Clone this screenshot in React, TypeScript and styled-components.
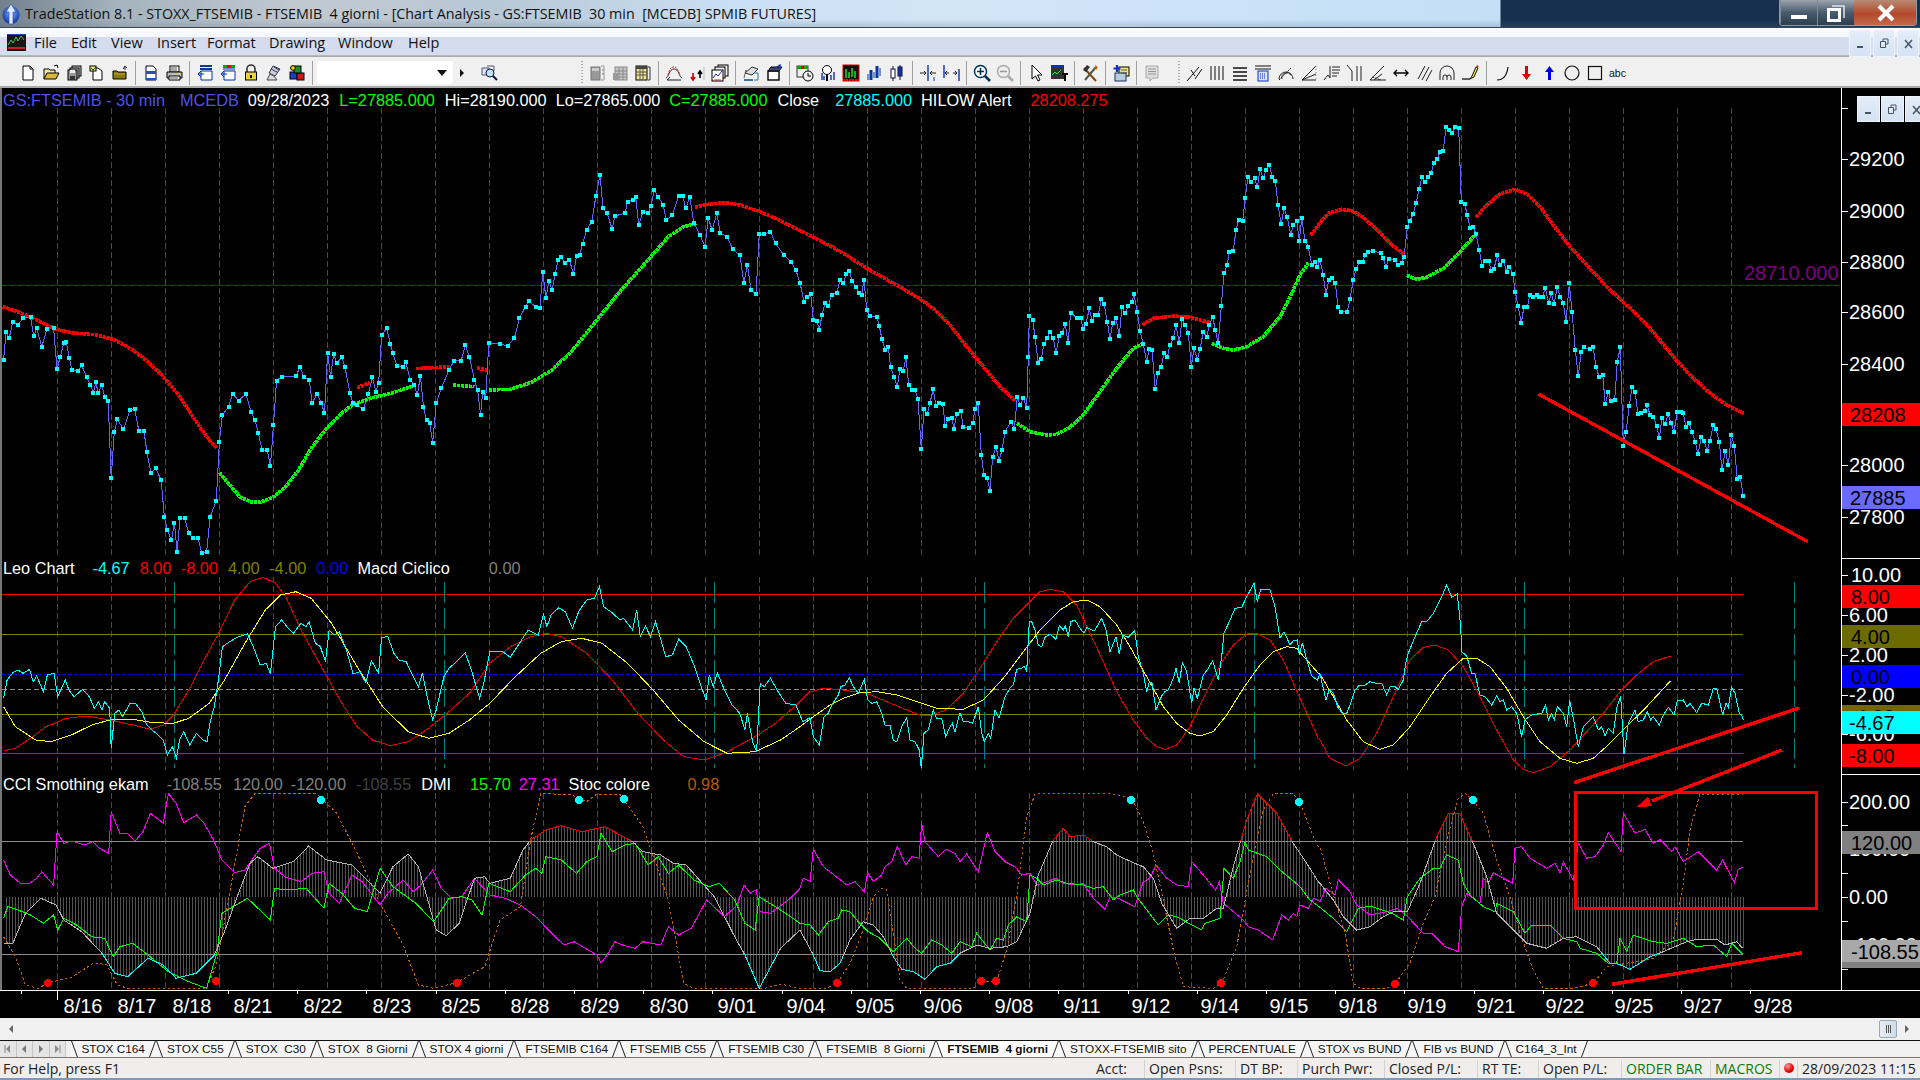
import React from "react";
import styled, { createGlobalStyle } from "styled-components";

const GlobalStyle = createGlobalStyle`
  html, body { margin: 0; padding: 0; background: #000; }
  * { box-sizing: border-box; }
`;

/* ---------- chart data, read off the screen in crop coordinates ---------- */
type Pt = [number, number];

const reader = (ox: number, sx: number, oy: number) => (s: string): Pt[] =>
  s.trim().split(/\s+/).map((p) => {
    const [x, y] = p.split(",").map(Number);
    return [ox + x / sx, oy + y / 3] as Pt;
  });

const topL = reader(0, 1.96, 90);
const topM = reader(800, 3, 90);
const topR = reader(1320, 3, 90);
const lowL = reader(0, 1.96, 540);
const lowM = reader(800, 3, 550);
const lowR = reader(1320, 3, 550);

const price: Pt[] = [
  ...topL("7,810 12,725 18,745 25,695 35,705 45,685 60,682 66,738 72,715 82,770 92,718 105,715 112,838 118,800 125,760 130,757 136,805 141,840 153,843 160,826 170,860 177,885 183,908 188,875 192,908 200,885 205,920 212,932 218,1165 224,1025 230,988 242,1018 255,960 264,957 272,1022 282,1022 288,1085 296,1150 305,1135 316,1170 322,1280 328,1320 336,1350 342,1298 347,1385 353,1285 362,1285 370,1330 378,1345 388,1345 396,1390 405,1385 412,1280 424,1232 430,1055 436,975 448,950 456,912 468,932 482,912 492,965 500,990 506,1028 514,1080 524,1080 530,1128 536,1005 542,872 552,860 580,858 588,832 596,862 606,870 612,938 622,912 630,940 636,970 642,788 648,860 654,793 660,820 670,802 676,830 686,910 692,940 700,945 712,958 722,912 730,862 737,905 742,880 748,735 758,715 765,762 770,790 778,828 790,830 795,815 804,870 812,885 818,915 824,858 830,952 836,990 842,998 848,1058 855,940 865,895 880,840 890,812 904,812 912,765 920,800 930,870 936,900 942,975 946,905 952,925 958,760 980,762 995,768 1008,745 1018,685 1030,650 1036,634 1050,650 1058,655 1064,545 1070,625 1076,572 1082,600 1088,552 1094,510 1100,502 1108,520 1116,510 1124,552 1130,498 1136,495 1142,462 1150,420 1160,395 1168,318 1176,255 1182,355 1190,370 1200,418 1205,378 1225,370 1230,335 1240,330 1246,320 1252,405 1260,365 1270,370 1276,348 1282,300 1290,320 1300,345 1306,390 1318,375 1330,318 1338,318 1344,355 1352,322 1360,400 1372,435 1382,470 1388,385 1396,420 1405,370 1412,430 1425,440 1436,478 1450,495 1458,578 1465,525 1472,600 1482,612 1488,432 1498,432 1510,425 1520,460 1536,495 1550,515 1560,540"),
  ...topM("0,578 12,635 22,620 32,612 40,690 50,692 58,720 66,675 75,640 85,648 95,615 110,608 120,570 130,580 138,553 148,542 156,572 168,590 176,608 185,615 192,570 200,660 210,678 230,680 238,708 246,748 256,780 265,772 272,832 282,862 292,890 300,836 310,842 318,802 326,885 335,900 345,900 354,928 364,1077 372,958 382,972 390,938 400,898 408,948 418,938 428,942 436,1008 445,988 455,985 462,1017 470,972 482,964 490,1010 508,1014 518,998 525,958 535,940 544,1095 552,1155 562,1165 570,1203 578,1100 588,1070 597,1112 606,1080 615,1025 633,995 643,1018 652,920 660,945 670,925 680,955 685,800 688,678 698,690 705,740 715,818 724,806 732,762 742,745 750,725 760,745 768,790 778,738 786,730 796,703 804,760 812,668 830,683 842,685 850,718 858,703 868,655 876,692 885,675 895,675 904,628 912,642 922,695 930,748 938,698 948,684 958,738 966,650 976,670 985,648 995,636 1002,613 1012,665 1020,722 1030,762 1040,816 1048,776 1056,780 1066,898 1074,848 1084,830 1092,790 1102,800 1110,765 1120,745 1128,706 1138,760 1146,688 1156,705 1165,730 1174,830 1182,775 1192,810 1200,778 1210,725 1220,742 1228,706 1238,680 1246,720 1255,760 1264,648 1272,550 1282,525 1288,485 1300,482 1308,420 1316,390 1328,392 1336,324 1344,260 1354,275 1364,265 1372,292 1380,238 1390,265 1398,240 1408,225 1416,260 1426,272 1434,345 1444,402 1452,355 1462,382 1472,435 1480,405 1490,392 1498,452 1505,385 1515,452 1525,470 1535,525 1544,515 1552,530"),
  ...topR("0,510 10,556 18,615 26,570 36,565 46,578 54,652 64,665 82,665 90,628 100,570 108,538 118,515 128,515 136,495 145,485 160,482 182,490 190,505 198,530 206,508 225,510 235,525 245,518 252,502 262,412 270,392 280,372 288,340 298,296 306,260 316,276 324,260 334,248 342,218 352,208 360,185 370,182 378,112 388,120 396,128 406,112 416,115 424,335 434,342 442,375 450,415 460,412 468,432 478,480 486,527 494,512 506,512 514,543 522,536 532,496 540,526 550,512 560,545 568,530 578,552 586,605 594,648 604,698 612,650 622,650 630,615 640,622 650,615 658,622 668,620 676,595 686,638 694,610 702,642 712,592 720,620 730,638 738,696 748,580 756,665 766,780 775,858 784,785 792,772 810,778 820,772 828,832 838,862 848,854 856,942 865,905 872,932 884,930 892,815 901,772 910,1068 918,1025 928,948 936,890 945,905 954,972 964,968 974,962 982,946 990,975 1000,980 1010,1008 1018,1043 1026,985 1036,1002 1044,972 1054,1000 1062,1025 1072,965 1082,965 1090,970 1098,1010 1108,1000 1116,1025 1126,1056 1134,1092 1144,1042 1152,1052 1162,1082 1170,1052 1180,1006 1188,1016 1198,1056 1206,1140 1216,1082 1225,1125 1234,1036 1243,1068 1252,1166 1261,1162 1270,1217"),
];

const hilowRed: Pt[][] = [
  topL("5,650 40,668 80,695 110,718 140,728 190,735 225,750 260,780 290,815 320,860 350,915 380,985 405,1040 425,1075"),
  topL("700,893 725,878"),
  topL("815,836 880,830"),
  topL("935,834 955,840"),
  [...topL("1362,352 1390,342 1420,338 1450,345 1490,365 1530,392"), ...topM("0,422 60,452 130,490 200,535 280,580 350,620 400,655 450,705 500,770 550,830 600,890 645,932")],
  topM("1028,705 1060,685 1120,678 1170,682 1230,698"),
  [...topM("1532,435 1552,410"), ...topR("0,398 25,370 65,358 95,362 130,382 180,428 220,468 252,493")],
  topR("468,382 495,350 540,312 585,298 620,312 660,350 700,405 750,470 800,525 860,590 930,655 990,715 1060,800 1110,855 1170,910 1220,945 1272,970"),
];

const hilowGreen: Pt[][] = [
  topL("430,1148 445,1175 470,1220 490,1235 510,1237 535,1222 560,1190 585,1140 610,1075 640,1015 670,970 690,945 730,923 770,908 810,888"),
  topL("888,885 930,890"),
  topL("958,900 1000,898 1040,878 1080,842 1120,785 1170,690 1215,605 1270,510 1310,440 1340,410 1365,400"),
  topM("650,1000 690,1025 740,1035 770,1033 810,1012 850,975 900,905 950,835 1000,775 1030,760"),
  topM("1235,760 1270,775 1300,780 1340,770 1390,740 1440,680 1480,600 1500,555 1525,518"),
  topR("260,556 290,568 320,562 370,535 420,485 468,432"),
];

const macd: Pt[] = [
  ...lowL("7,475 14,420 25,398 35,390 45,400 58,388 65,425 72,408 85,455 93,405 106,400 113,470 128,420 135,450 145,470 162,448 175,470 185,505 193,485 200,510 205,485 215,505 218,625 225,520 233,510 240,530 255,490 265,490 278,515 288,555 298,570 310,585 320,600 328,645 338,620 346,655 352,600 360,575 372,615 385,580 398,600 406,605 412,545 420,500 428,420 436,320 450,305 465,292 485,282 495,315 510,375 522,370 530,402 540,260 552,240 565,265 575,280 590,250 600,260 606,245 618,310 628,320 638,365 645,270 655,285 665,275 680,335 692,402 705,395 717,428 728,362 742,400 748,292 760,290 772,340 782,360 796,365 810,410 820,440 828,400 840,490 848,540 855,510 870,410 880,385 895,365 912,338 925,395 940,475 948,430 960,335 985,335 1000,352 1018,310 1035,270 1055,285 1065,222 1072,260 1080,225 1095,203 1108,215 1122,265 1135,212 1150,180 1165,175 1175,140 1183,200 1200,218 1215,240 1222,235 1240,270 1248,210 1255,290 1265,258 1275,290 1285,245 1305,350 1318,345 1330,298 1345,320 1360,375 1372,430 1384,480 1390,405 1398,440 1406,398 1420,450 1435,495 1450,520 1460,570 1465,520 1475,605 1483,635 1490,430 1498,440 1510,415 1525,455 1540,490 1560,495"),
  ...lowM("0,495 8,515 30,503 40,560 58,585 72,500 85,490 95,465 115,435 122,410 135,405 148,383 160,410 175,430 193,388 203,450 215,460 230,455 245,490 255,525 270,525 280,570 290,575 305,530 320,503 330,570 345,575 358,600 364,655 372,550 385,540 400,480 410,505 425,505 437,560 450,530 457,520 465,545 480,488 490,515 505,515 518,520 535,470 545,550 553,575 565,550 572,565 585,480 597,505 615,440 630,415 640,405 650,358 665,355 672,348 680,365 688,215 695,215 705,240 715,285 725,290 735,262 750,252 768,268 778,228 790,240 796,228 805,260 812,215 825,210 840,235 852,250 860,232 875,240 885,240 905,205 918,240 930,305 948,260 958,312 968,255 985,262 1004,242 1015,320 1030,370 1040,425 1048,395 1056,400 1068,480 1084,440 1094,425 1105,420 1120,385 1128,355 1138,400 1147,338 1160,365 1175,460 1182,415 1192,445 1210,375 1225,355 1238,332 1255,390 1265,320 1272,250 1290,210 1305,175 1325,172 1340,140 1362,100 1372,155 1382,118 1410,120 1425,170 1440,265 1452,245 1470,285 1480,272 1492,270 1498,315 1507,278 1520,330 1535,378 1552,390"),
  ...lowR("0,372 18,450 28,418 40,430 55,475 68,490 80,490 92,460 105,420 118,406 135,405 150,395 170,400 185,400 200,435 210,410 225,410 235,418 250,390 258,335 265,310 285,260 305,215 320,215 340,190 365,140 380,105 395,142 412,132 422,230 425,305 440,318 455,370 465,372 480,435 495,440 515,465 530,437 540,455 550,450 560,480 575,470 590,490 605,560 615,510 635,495 665,490 677,465 685,510 695,490 703,510 712,470 730,490 740,530 749,450 760,505 775,590 790,530 820,500 835,540 845,530 855,558 865,535 880,550 890,475 902,438 912,612 925,520 945,480 955,515 970,510 982,485 992,510 1000,500 1018,525 1030,495 1045,472 1062,495 1072,452 1090,450 1100,470 1110,460 1130,488 1145,460 1165,465 1180,415 1190,415 1208,495 1218,460 1225,472 1235,412 1245,430 1258,490 1265,495 1270,510"),
];

const macdRed: Pt[] = [
  ...lowL("7,632 30,625 60,595 90,560 130,535 170,528 215,540 260,555 295,568 320,555 340,525 370,450 400,360 430,275 460,180 490,125 515,112 540,130 560,170 590,270 630,380 670,490 700,560 730,600 765,617 800,605 840,565 880,515 920,460 960,370 1000,320 1040,290 1070,280 1100,290 1150,340 1200,420 1250,520 1300,600 1340,650 1380,660 1420,640 1480,590 1520,550"),
  ...lowM("0,455 30,425 70,415 130,420 200,430 260,455 320,480 360,495 400,495 440,478 490,430 550,340 600,260 640,205 690,155 720,125 750,118 790,125 830,165 870,250 910,335 950,425 1000,510 1040,565 1070,590 1095,598 1130,585 1170,530 1210,445 1260,345 1300,285 1340,252 1370,250 1410,270 1450,330 1500,445 1555,565"),
  ...lowR("0,570 30,625 78,648 120,625 170,550 220,440 270,330 310,292 345,285 385,300 430,350 480,440 530,540 580,630 610,658 640,668 690,650 750,600 800,545 850,490 900,425 950,375 1000,335 1052,318"),
];

const macdYellow: Pt[] = [
  ...lowL("7,500 30,560 70,600 100,605 140,585 180,555 215,540 260,538 300,548 340,550 370,535 410,490 440,420 480,310 520,210 550,165 580,155 610,175 650,250 700,380 750,500 800,575 840,595 880,580 920,540 960,490 1010,410 1060,340 1100,305 1140,295 1180,310 1230,370 1280,450 1330,540 1380,605 1425,640 1480,635 1530,600"),
  ...lowM("0,530 40,500 90,465 130,445 180,428 230,425 290,435 350,455 410,475 490,478 550,450 610,385 670,305 720,240 780,180 820,155 860,150 900,170 950,225 990,290 1040,380 1090,470 1130,520 1170,550 1200,558 1240,545 1280,495 1330,415 1380,345 1420,305 1460,290 1490,295 1520,330 1555,370"),
  ...lowR("0,372 40,440 80,510 130,575 180,598 220,585 270,530 330,440 380,370 430,325 470,325 510,350 560,415 610,500 660,575 720,625 770,640 820,625 870,580 930,520 980,470 1052,392"),
];

const magenta: Pt[] = [
  ...lowL("7,960 20,1005 40,1030 58,1030 72,1015 82,995 105,1035 112,875 125,910 140,903 165,915 182,905 195,925 213,940 218,815 235,880 250,880 265,903 280,875 295,820 320,850 330,760 345,790 360,848 385,825 400,850 420,905 435,960 460,998 480,990 510,925 528,910 538,985 560,1012 590,1025 612,1000 635,995 645,1060 665,1090 690,1005 710,1025 745,1095 760,1060 790,1020 810,1055 825,1035 848,990 865,1045 885,1075 905,1070 930,1015 960,1065 990,1075 1020,1095 1050,1130 1075,1170 1105,1215 1125,1205 1170,1245 1178,1270 1190,1245 1205,1205 1220,1215 1245,1225 1260,1205 1295,1215 1310,1160 1330,1185 1355,1165 1385,1080 1420,1130 1445,1095 1458,1035 1470,1060 1482,1050 1490,1115 1510,1120 1545,1080"),
  ...lowM("0,1015 10,985 30,995 40,898 70,950 115,985 140,1005 165,995 193,1025 203,968 220,995 245,975 255,950 275,935 292,890 318,945 335,920 357,925 365,820 375,875 415,920 437,898 465,910 480,935 500,912 535,965 562,848 585,905 615,935 645,950 665,975 690,970 710,1005 770,985 790,1000 830,1005 850,1000 880,1045 915,1078 930,1040 955,1045 1004,1070 1030,995 1050,985 1068,945 1100,985 1130,1005 1165,1010 1175,935 1210,975 1247,1020 1258,995 1270,1060 1330,1110 1345,1130 1375,1140 1418,1170 1445,1095 1465,1110 1480,1090 1490,1100 1500,1065 1525,1075 1540,1045"),
  ...lowR("0,1055 18,1015 45,1035 55,990 90,1025 110,1065 150,1095 200,1085 230,1075 258,1095 310,1150 335,1150 375,1190 415,1205 425,1070 440,1030 480,1060 490,985 505,1000 520,968 550,985 578,1000 585,895 605,890 630,925 680,955 705,940 720,970 730,935 760,990 775,880 800,925 825,920 850,885 865,848 903,905 910,790 945,850 975,838 1000,880 1020,868 1055,905 1065,890 1090,935 1135,905 1190,960 1208,930 1243,998 1255,958 1268,952"),
];

const dmiGreen: Pt[] = [
  ...lowL("7,1135 15,1100 35,1110 60,1125 85,1150 105,1125 113,1170 125,1135 150,1155 180,1190 205,1195 222,1250 235,1220 260,1210 290,1245 330,1295 370,1325 405,1345 425,1240 435,1120 485,1075 530,1140 538,1045 560,1050 600,1045 635,1105 645,1030 670,1060 695,1105 720,1115 745,985 770,1040 815,1090 850,1145 880,1075 905,1070 925,1080 945,1125 958,1030 1000,1055 1030,1005 1050,985 1062,1000 1070,950 1100,960 1130,1000 1150,965 1170,950 1178,880 1200,935 1225,915 1245,910 1270,975 1290,950 1310,1000 1330,975 1360,1020 1390,1040 1410,1030 1440,1080 1460,1150 1480,1170 1488,1070 1530,1110"),
  ...lowM("0,1120 30,1125 55,1155 85,1115 115,1105 125,1080 150,1085 175,1115 205,1145 240,1165 280,1205 320,1165 345,1195 365,1210 395,1170 425,1185 455,1210 480,1175 515,1190 530,1150 570,1200 590,1165 610,1170 625,1125 650,1100 680,1115 690,975 710,985 730,1005 770,990 800,1000 850,1005 880,1015 910,1010 940,1050 960,1035 1000,1020 1010,1040 1075,1125 1105,1095 1130,1100 1175,1125 1205,1140 1215,1120 1260,1105 1272,955 1300,985 1320,935 1335,875 1345,900 1400,920 1440,960 1470,985 1500,1010 1530,1050"),
  ...lowR("0,1072 40,1105 80,1145 115,1075 150,1068 185,1080 215,1090 250,1110 262,1040 300,985 340,955 360,955 380,915 415,930 430,1000 450,1035 490,1070 525,1085 530,1060 580,1085 615,1150 635,1125 690,1125 730,1165 770,1175 780,1195 830,1210 865,1240 890,1240 900,1165 920,1205 940,1155 1000,1175 1040,1180 1090,1165 1130,1190 1180,1185 1220,1220 1235,1180 1268,1212"),
];

const cci: Pt[] = [
  ...lowL("7,1210 25,1210 50,1120 80,1075 110,1095 125,1140 160,1175 200,1240 225,1300 250,1310 290,1255 320,1275 345,1315 385,1300 420,1245 440,1175 465,1070 490,970 505,950 535,985 575,965 605,918 640,960 690,975 745,1060 770,980 800,942 820,980 855,1170 875,1187 900,1150 930,1015 950,1010 960,1030 1000,1015 1025,930 1040,900 1070,870 1100,857 1140,875 1185,860 1240,905 1260,935 1295,945 1320,970 1345,975 1400,1070 1440,1190 1460,1245 1488,1345 1530,1225"),
  ...lowM("0,1140 40,1215 60,1262 90,1265 120,1240 150,1170 190,1115 220,1125 250,1160 280,1220 305,1258 340,1265 375,1288 410,1250 450,1240 480,1210 530,1185 570,1195 620,1190 650,1175 690,1090 715,975 760,870 790,835 810,860 850,855 880,875 920,890 950,915 1000,938 1030,950 1060,985 1085,1060 1130,1135 1170,1105 1210,1105 1250,1075 1270,1075 1300,950 1340,810 1372,732 1430,790 1480,880 1520,940 1555,995"),
  ...lowR("0,1000 40,1050 70,1100 110,1140 150,1130 190,1100 220,1085 262,1085 300,1000 350,860 385,790 420,792 460,880 500,980 530,1090 570,1130 620,1180 680,1195 730,1165 770,1160 830,1190 870,1240 890,1240 930,1258 990,1220 1030,1205 1100,1175 1130,1168 1190,1168 1215,1185 1250,1175 1268,1195"),
];

const stoc: Pt[] = [
  ...lowL("7,1190 30,1250 50,1335 75,1345 95,1328 140,1312 185,1268 210,1275 230,1335 250,1345 405,1345 425,1270 450,1060 480,800 500,760 620,760 660,820 700,940 745,1090 790,1215 820,1335 850,1345 895,1328 950,1280 980,1140 1020,1100 1040,900 1060,760 1120,765 1150,785 1170,762 1215,762 1260,860 1310,1080 1340,1330 1360,1345 1500,1345 1530,1332"),
  ...lowM("0,1315 80,1315 112,1298 150,1240 190,1140 220,1040 245,1015 260,1020 280,1150 300,1290 320,1315 520,1315 545,1293 590,1293 620,1200 650,1040 680,800 705,732 930,730 995,745 1030,815 1060,910 1090,1050 1120,1200 1150,1310 1240,1315 1265,1300 1310,1190 1345,1000 1390,780 1420,732 1480,730 1505,770 1540,860 1555,890"),
  ...lowR("0,890 30,1000 75,1150 100,1300 120,1315 200,1315 225,1302 270,1240 310,1120 345,1040 380,870 415,745 435,730 460,752 490,790 530,930 570,1040 600,1150 640,1260 670,1315 760,1315 820,1300 860,1250 920,1240 1000,1225 1060,1170 1090,1000 1110,840 1140,732 1210,732 1268,732"),
];

const cyanDots: Pt[] = [[321, 800], [579, 800], [624, 799], [1131, 800], [1299, 802], [1473, 800]];
const redDots: Pt[] = [[48, 983], [216, 981], [457, 983], [837, 983], [981, 981], [996, 981], [1221, 983], [1395, 984], [1593, 983]];

const gridX = Array.from({ length: 32 }, (_, k) => 57 + 54 * k);
const timeLabels = ["8/16", "8/17", "8/18", "8/21", "8/22", "8/23", "8/25", "8/28", "8/29", "8/30", "9/01", "9/04", "9/05", "9/06", "9/08", "9/11", "9/12", "9/14", "9/15", "9/18", "9/19", "9/21", "9/22", "9/25", "9/27", "9/28"];
const timeX = [83, 137, 192, 253, 323, 392, 461, 530, 600, 669, 737, 806, 875, 943, 1014, 1082, 1151, 1220, 1289, 1358, 1427, 1496, 1565, 1634, 1703, 1773];

const toPoints = (pts: Pt[]) => pts.map(([x, y]) => `${x.toFixed(1)},${y.toFixed(1)}`).join(" ");
const gridPath = (y1: number, y2: number) => gridX.map((x) => `M${x + 0.5} ${y1}V${y2}`).join("");

const interp = (pts: Pt[], x: number) => {
  for (let i = 1; i < pts.length; i++) {
    if (x <= pts[i][0]) {
      const [x0, y0] = pts[i - 1];
      const [x1, y1] = pts[i];
      return y0 + ((y1 - y0) * (x - x0)) / Math.max(x1 - x0, 0.01);
    }
  }
  return pts[pts.length - 1][1];
};

const hatchPath = () => {
  let d = "";
  for (let x = 6; x < 1744; x += 3) d += `M${x + 0.5} 897V${interp(cci, x).toFixed(1)}`;
  return d;
};

/* ---------- window chrome ---------- */
const Screen = styled.div`
  width: 1920px;
  height: 1080px;
  overflow: hidden;
  display: flex;
  flex-direction: column;
  background: #000;
`;

const TitleBar = styled.div`
  height: 28px;
  display: flex;
  align-items: center;
  padding-left: 2px;
  background:
    linear-gradient(180deg, transparent 70%, rgba(90, 110, 130, 0.25) 100%),
    linear-gradient(90deg, #71808c 0, #a4b3bd 6%, #c1c9d0 16%, #b8c8d6 26%, #c9dff3 38%, #d3e6f8 50%, #c8e0f7 70%, #c6dff6 78.1%, #17304d 78.2%, #17304d 100%);
  border-bottom: 1px solid #3a4652;
`;

const TitleText = styled.span`
  margin-left: 5px;
  font: 14.3px "Open Sans", sans-serif;
  color: #111;
  white-space: pre;
`;

const WinButtons = styled.div`
  margin-left: auto;
  margin-right: 3px;
  height: 26px;
  display: flex;
  align-self: flex-start;
  border: 1px solid #8d9aa6;
  border-top: none;
  border-radius: 0 0 4px 4px;
  overflow: hidden;
`;

const WinButton = styled.div<{ $w: number; $close?: boolean }>`
  width: ${(p) => p.$w}px;
  display: flex;
  align-items: center;
  justify-content: center;
  background: ${(p) =>
    p.$close
      ? "linear-gradient(180deg, #b78a74, #b5482a 55%, #c26a4c)"
      : "linear-gradient(180deg, #9aa5ae, #4a5c6c 50%, #2b3f52)"};
  border-left: 1px solid ${(p) => (p.$close ? "transparent" : "#7d8b97")};
`;

const MenuBar = styled.div`
  height: 29px;
  display: flex;
  align-items: center;
  padding-left: 7px;
  background: linear-gradient(180deg, #fbfcfe 0, #f4f6fb 30%, #d5dcee 32%, #d5dcee 92%, #a9a9a9 96%, #a9a9a9 100%);
`;

const MenuItems = styled.div`
  display: flex;
  margin-left: 8px;
`;

const MenuItem = styled.span<{ $w: number }>`
  width: ${(p) => p.$w}px;
  font: 14.5px "Open Sans", sans-serif;
  color: #111;
`;

const MdiGroup = styled.div`
  margin-left: auto;
  margin-right: 1px;
  display: flex;
  gap: 2px;
  align-self: flex-start;
  padding-top: 2px;
`;

const MdiButton = styled.div<{ $w?: number; $h?: number }>`
  width: ${(p) => p.$w ?? 22}px;
  height: ${(p) => p.$h ?? 27}px;
  display: flex;
  align-items: center;
  justify-content: center;
  background: linear-gradient(180deg, #e4edf9, #d4e2f3);
  border: 1px solid #eef4fb;
  flex-shrink: 0;
`;

const ToolBar = styled.div`
  height: 31px;
  display: flex;
  align-items: center;
  padding: 2px 0 0 16.5px;
  background: #f0f0f0;
  border-bottom: 2px solid #a8a8a8;
`;

const Tool = styled.div`
  width: 23px;
  height: 23px;
  display: flex;
  align-items: center;
  justify-content: center;
  flex-shrink: 0;
`;

const ToolSep = styled.div<{ $w?: number }>`
  width: ${(p) => p.$w ?? 8}px;
  height: 24px;
  flex-shrink: 0;
  display: flex;
  justify-content: center;
  &::before {
    content: "";
    width: 1px;
    background: #a0a0a0;
  }
`;

const Grip = styled.div<{ $ml: number }>`
  width: 3px;
  height: 24px;
  margin-left: ${(p) => p.$ml}px;
  margin-right: 2px;
  flex-shrink: 0;
  background-image: linear-gradient(#aaa 50%, transparent 50%);
  background-size: 2px 3px;
  background-repeat: repeat-y;
`;

const Combo = styled.div`
  width: 136px;
  height: 23px;
  background: #fff;
  border-radius: 3px;
  display: flex;
  align-items: center;
  justify-content: flex-end;
  padding-right: 6px;
  flex-shrink: 0;
`;

const ToolSpacer = styled.div<{ $w: number }>`
  width: ${(p) => p.$w}px;
  flex-shrink: 0;
`;

/* ---------- chart panes ---------- */
const Pane = styled.div<{ $h: number }>`
  height: ${(p) => p.$h}px;
  display: flex;
  flex-shrink: 0;
`;

const Plot = styled.div`
  position: relative;
  width: 1841px;
  box-shadow: inset 2px 0 0 #777;
`;

const PlotSvg = styled.svg`
  display: block;
  width: 1841px;
  height: 100%;
  overflow: visible;
  shape-rendering: crispEdges;
  font-family: "Liberation Sans", Arial, sans-serif;
`;

const Legend = styled.div<{ $lh: number }>`
  position: absolute;
  top: 0;
  left: 3px;
  display: flex;
  font: 16.3px/${(p) => p.$lh}px "Liberation Sans", Arial, sans-serif;
  white-space: pre;
`;

const LegendItem = styled.span<{ $color: string; $gap?: number }>`
  color: ${(p) => p.$color};
  margin-left: ${(p) => p.$gap ?? 0}px;
`;

const Axis = styled.div`
  position: relative;
  width: 79px;
  border-left: 1px solid #fff;
  background: #000;
  overflow: hidden;
`;

const AxisSvg = styled.svg`
  display: block;
  width: 78px;
  height: 100%;
  font-family: "Liberation Sans", Arial, sans-serif;
  font-size: 20px;
`;

const AxisControls = styled.div`
  position: absolute;
  top: 8px;
  left: 15px;
  display: flex;
  gap: 1px;
`;

const TimeAxis = styled.div`
  height: 28px;
  flex-shrink: 0;
`;

const TimeSvg = styled.svg`
  display: block;
  width: 1920px;
  height: 28px;
  font-family: "Liberation Sans", Arial, sans-serif;
  font-size: 20px;
`;

/* ---------- bottom bars ---------- */
const ScrollRow = styled.div`
  height: 22px;
  display: flex;
  align-items: center;
  padding: 0 9px 0 7px;
  background: #f0f0f0;
  flex-shrink: 0;
`;

const ScrollThumb = styled.div`
  margin-left: auto;
  margin-right: 6px;
  width: 18px;
  height: 18px;
  background: linear-gradient(90deg, #e6edf4, #cfdbe6);
  border: 1px solid #9aa7b4;
  border-radius: 2px;
  display: flex;
  align-items: center;
  justify-content: center;
  gap: 1px;
`;

const ThumbLine = styled.i`
  width: 1px;
  height: 8px;
  background: #555;
`;

const TabRow = styled.div`
  height: 18px;
  display: flex;
  background: #f0f0f0;
  border-top: 1px solid #111;
  border-bottom: 1px solid #777;
  flex-shrink: 0;
`;

const TabNav = styled.div`
  display: flex;
  margin-right: 4.500px;
`;

const TabNavBtn = styled.div`
  width: 16.5px;
  display: flex;
  align-items: center;
  justify-content: center;
  border-right: 1px solid #c4c4c4;
  background: #e4e4e4;
`;

const Tab = styled.div<{ $active?: boolean }>`
  position: relative;
  padding: 1px 11px 0;
  font: ${(p) => (p.$active ? "bold " : "")}11.8px/15px "Liberation Sans", Arial, sans-serif;
  color: #111;
  white-space: pre;
  background: ${(p) => (p.$active ? "#fff" : "#f6f6f6")};
  &::before,
  &::after {
    content: "";
    position: absolute;
    top: 0;
    bottom: 0;
    width: 1px;
    background: #222;
  }
  &::before {
    left: 3px;
    transform: skewX(20deg);
  }
  &::after {
    right: 3px;
    transform: skewX(-20deg);
  }
`;

const StatusBar = styled.div`
  height: 20px;
  display: flex;
  align-items: center;
  padding-top: 2px;
  background: #f0eeec;
  font: 14px/18px "Open Sans", sans-serif;
  color: #222;
  flex-shrink: 0;
`;

const StatusText = styled.span`
  flex: 1;
  padding-left: 3px;
`;

const StatusCell = styled.span<{ $w: number; $green?: boolean }>`
  width: ${(p) => p.$w}px;
  padding-left: 4px;
  border-left: 1px solid #d4d2d0;
  color: ${(p) => (p.$green ? "#0a7a0a" : "#222")};
  white-space: nowrap;
  flex-shrink: 0;
`;

const AcctCell = styled.span`
  width: 48px;
  flex-shrink: 0;
`;

const AlarmDot = styled.span`
  width: 18px;
  height: 18px;
  border-left: 1px solid #d4d2d0;
  display: flex;
  align-items: center;
  justify-content: center;
  flex-shrink: 0;
  &::before {
    content: "";
    width: 10px;
    height: 10px;
    margin-top: -3px;
    border-radius: 50%;
    background: radial-gradient(circle at 35% 30%, #ff9a9a, #e00000 60%, #900);
  }
`;

const BottomEdge = styled.div`
  height: 2px;
  background: #7d99ba;
  flex-shrink: 0;
`;

/* ---------- toolbar icons ---------- */
const Ico: React.FC<{ children: React.ReactNode; size?: number }> = ({ children, size = 18 }) => (
  <svg width={size} height={size} viewBox="0 0 18 18" fill="none">
    {children}
  </svg>
);

const K = "#000";
const icons: Record<string, React.ReactNode> = {
  doc: <><path d="M4 2h7l3 3v11H4z" fill="#fff" stroke={K} /><path d="M11 2v3h3" stroke={K} /></>,
  open: <><path d="M2 15V5h5l1 1h5v3" fill="#f5e7a0" stroke={K} /><path d="M2 15l3-6h12l-3 6z" fill="#d9b83c" stroke={K} /><path d="M12 2l3-1 1 3" stroke={K} /></>,
  stack: <><rect x="7" y="2" width="9" height="10" fill="#ccc" stroke={K} /><rect x="5" y="4" width="9" height="10" fill="#bbb" stroke={K} /><rect x="3" y="6" width="9" height="10" fill="#999" stroke={K} /><rect x="5" y="6" width="5" height="3" fill="#eee" /><rect x="5" y="12" width="5" height="4" fill="#333" /></>,
  note: <><path d="M5 4h5l4 3v9H5z" fill="#fff" stroke={K} /><rect x="2" y="2" width="6" height="5" fill="#f3e37a" stroke={K} /><path d="M3 4l2 2 3-3" stroke="#060" /></>,
  olive: <><path d="M2 15V7h4l1 1h8v7z" fill="#8a7a10" stroke={K} /><path d="M3 10h11" stroke="#b8a830" /><path d="M12 5l2-3 2 2M14 2v4" stroke="#226" /></>,
  blueDoc: <><path d="M4 2h7l3 3v11H4z" fill="#fff" stroke="#003" /><rect x="4" y="7" width="10" height="3" fill="#2a4fb5" /><rect x="4" y="14" width="10" height="2" fill="#2a4fb5" /></>,
  print: <><rect x="5" y="2" width="9" height="6" fill="#fff" stroke={K} /><path d="M2 8h15v6H2z" fill="#bbb" stroke={K} /><path d="M4 12h11v4H4z" fill="#fff" stroke={K} /><path d="M6 4h6M6 6h6M5 14h8" stroke="#555" /><rect x="13" y="9" width="2" height="1" fill="#fd0" /></>,
  winL: <><path d="M4 2h12M4 5h12" stroke="#003a9a" strokeWidth="2" /><path d="M5 7h11v9H5z" fill="#fff" stroke="#03a" /><path d="M8 10H2l3-3M2 10l3 3" stroke="#03a" /></>,
  winC: <><rect x="4" y="1" width="12" height="3" fill="#0a0" /><rect x="8" y="1" width="4" height="3" fill="#e00" /><path d="M5 7h11v9H5z" fill="#fff" stroke="#03a" /><path d="M4 5h12" stroke="#03a" /><path d="M8 10H2l3-3M2 10l3 3" stroke="#03a" /></>,
  lock: <><path d="M5 8V5a4 4 0 018 0v3" stroke="#333" strokeWidth="1.6" /><rect x="3.5" y="8" width="11" height="8" fill="#e8cf40" stroke={K} /><rect x="8" y="11" width="2" height="3" fill={K} /></>,
  sat: <><path d="M8 2l7 3-5 7-6-3z" fill="#ccd" stroke="#335" /><path d="M6 5l6 3M9 3l5 3" stroke="#335" /><path d="M2 16l3-6 4 2 3 4z" fill="#ddd" stroke="#444" /></>,
  cubes: <><rect x="2" y="8" width="7" height="7" fill="#1a3fd0" stroke={K} /><rect x="9" y="9" width="7" height="7" fill="#d01515" stroke={K} /><rect x="6" y="2" width="7" height="7" fill="#1a8f2a" stroke={K} /><circle cx="5" cy="4" r="2.4" fill="#fc0" stroke={K} /></>,
  find: <><path d="M2 4h7v7H2z" fill="#d5e3f5" stroke="#557" /><path d="M7 2h7v5" stroke="#557" /><circle cx="10" cy="9" r="4" fill="#bfe4f5" stroke="#114" /><path d="M13 12l4 4" stroke="#114" strokeWidth="2" /></>,
  grayCalc: <><rect x="3" y="3" width="9" height="13" fill="#999" stroke="#777" /><rect x="4" y="4" width="7" height="3" fill="#ccc" /><path d="M13 2h3v14h-3" stroke="#999" /><path d="M14 6h2M14 10h2" stroke="#777" /></>,
  grayTbl: <><rect x="4" y="3" width="12" height="13" fill="#c8c8c8" stroke="#888" /><path d="M4 7h12M4 10h12M4 13h12M8 3v13M12 3v13" stroke="#888" /><rect x="2" y="9" width="5" height="7" fill="#999" /></>,
  table: <><rect x="2" y="2" width="11" height="14" fill="#f3e68a" stroke={K} /><rect x="2" y="2" width="11" height="3" fill="#444" /><path d="M2 8h11M2 11h11M6 5v11M9 5v11" stroke="#555" /><path d="M14 3h2v13h-2" stroke="#333" /></>,
  wave: <><path d="M1 14c3-1 3-9 8-9s5 8 8 9" stroke="#333" /><path d="M3 11c2-8 4-8 6-8s4 2 6 8" stroke="#c22" strokeDasharray="2 1" /><path d="M2 16h14M2 16l3-3" stroke="#123" /></>,
  arrows: <><path d="M5 9v7M3 13l2 3 2-3" stroke="#c00" strokeWidth="1.6" /><path d="M12 14V7M10 10l2-3 2 3" stroke="#000" strokeWidth="1.6" /><path d="M16 3v13" stroke="#bbb" /></>,
  charts: <><rect x="7" y="1" width="10" height="11" fill="#eee" stroke={K} /><rect x="4" y="3" width="10" height="11" fill="#eee" stroke={K} /><rect x="1" y="6" width="11" height="11" fill="#fff" stroke={K} /><path d="M2 14l3-4 2 2 4-5" stroke="#22a" /><path d="M3 16h7" stroke="#c22" /></>,
  chartIn: <><path d="M2 14l2-8 3 4 3-7" stroke="#666" /><path d="M3 9l7-6 6 2-6 6z" fill="#ddd" stroke="#333" /><path d="M2 15h9v2H2z" fill="#37a" /><path d="M12 9h4v7h-4" stroke="#37a" /></>,
  box: <><rect x="3" y="7" width="11" height="9" fill="#fff" stroke={K} strokeWidth="1.4" /><path d="M3 7l3-4h11l-3 4z" fill="#446" stroke={K} /><path d="M9 5l6-4v4" stroke="#13a" strokeWidth="1.4" /></>,
  cal: <><rect x="1" y="2" width="11" height="11" fill="#eee" stroke="#333" /><rect x="1" y="2" width="11" height="3" fill="#0a0" /><rect x="5" y="2" width="3" height="3" fill="#d00" /><circle cx="12" cy="12" r="5" fill="#eee" stroke={K} /><path d="M12 9v3h3" stroke={K} /></>,
  barsFind: <><circle cx="8" cy="6" r="4.5" fill="#fff" stroke={K} /><path d="M8 11v6" stroke={K} strokeWidth="2" /><path d="M3 9v7M5 12v4M12 11v5M15 8v8" stroke="#13a" strokeWidth="1.4" /></>,
  blackChart: <><rect x="1" y="1" width="16" height="16" fill="#111" stroke="#d00" /><path d="M4 5v9M7 8v6M10 4v9M13 7v7" stroke="#2d2" strokeWidth="1.5" /><path d="M1 16h16M1 16" stroke="#f00" strokeWidth="2" strokeDasharray="2 1" /></>,
  blueBars: <><path d="M6 6v10M12 2v12" stroke="#013a9c" strokeWidth="3" /><path d="M3 10v6M9 8v6M15 4v8" stroke="#013a9c" /></>,
  candle: <><path d="M5 2v15M12 1v15" stroke="#114" /><rect x="3" y="5" width="4" height="9" fill="#fff" stroke="#114" /><rect x="10" y="3" width="4" height="9" fill="#13a" stroke="#114" /></>,
  squeeze: <><path d="M9 1v16" stroke="#13a" strokeWidth="1.4" /><path d="M1 9h6M5 7l2 2-2 2M17 9h-6M13 7l-2 2 2 2" stroke="#222" /><path d="M15 13v4" stroke="#13a" /></>,
  spread: <><path d="M2 1v13" stroke="#13a" strokeWidth="1.4" /><path d="M7 9H3M5 7L3 9l2 2M11 9h4M13 7l2 2-2 2" stroke="#222" /><path d="M17 5v12" stroke="#13a" strokeWidth="1.4" /></>,
  zoomIn: <><circle cx="7.5" cy="7.5" r="6" fill="#fff" stroke="#035" strokeWidth="1.5" /><path d="M7.5 4v7M4 7.5h7" stroke="#035" strokeWidth="1.6" /><path d="M12 12l5 5" stroke="#035" strokeWidth="2.6" /></>,
  zoomOut: <><circle cx="7.5" cy="7.5" r="6" fill="#eee" stroke="#aaa" strokeWidth="1.5" /><path d="M4 7.5h7" stroke="#999" strokeWidth="1.6" /><path d="M12 12l5 5" stroke="#aaa" strokeWidth="2.6" /></>,
  cursor: <path d="M5 1v14l3.5-3 2.5 5 2-1-2.5-5h4.500z" fill="#fff" stroke={K} />,
  screenT: <><rect x="1" y="1" width="13" height="14" fill="#333" /><rect x="1" y="1" width="13" height="2" fill="#03c" /><path d="M2 11l3-3 2 2 4-4" stroke="#2e2" /><path d="M12 10h6M15 10v7" stroke={K} strokeWidth="2" /></>,
  hammer: <><path d="M3 4l12 13" stroke="#7a4a10" strokeWidth="2" /><path d="M2 6l4-5 3 2-4 5z" fill="#333" /><path d="M15 3L4 16" stroke="#554" strokeWidth="2" /><path d="M14 1l3 2-2 3z" fill="#c60" /></>,
  plusDoc: <><rect x="7" y="3" width="10" height="9" fill="#f3e37a" stroke={K} /><rect x="3" y="9" width="11" height="8" fill="#bcd" stroke="#136" /><path d="M5 1v7M1.5 4.5h7" stroke="#13c" strokeWidth="2.2" /><path d="M9 6h6M9 9h6" stroke="#555" /></>,
  grayNote: <><path d="M3 2h12v12H10l-3 3v-3H3z" fill="#ddd" stroke="#aaa" /><path d="M5 5h8M5 7.5h8M5 10h8" stroke="#999" /></>,
  trend: <><path d="M2 17L14 3" stroke="#111" /><path d="M6 6l4 6" stroke="#111" /><path d="M10 15L17 5" stroke="#111" /></>,
  vlines: <path d="M3 2v14M7 2v14M11 2v14M15 2v14" stroke="#111" />,
  hlines: <path d="M2 4h14M2 8h14M2 12h14M2 16h14" stroke="#111" strokeWidth="1.3" />,
  calcLines: <><path d="M1 2h16M1 5h16" stroke="#111" /><rect x="4" y="7" width="10" height="10" fill="#dde" stroke="#03c" /><path d="M6 10h6M6 12h6M6 14h6" stroke="#03c" strokeDasharray="1 1" /></>,
  arcs: <><path d="M2 15a7 7 0 0114 0M5 15a5 5 0 019-4" stroke="#222" /><path d="M2 16L14 4" stroke="#222" strokeDasharray="2 1" /></>,
  fan: <><path d="M2 16L16 2M2 16l14-6M2 16h14" stroke="#222" /><path d="M16 2v14" stroke="#888" strokeDasharray="1 2" /></>,
  stair: <><path d="M1 16l4-5 2 3V2" stroke="#222" /><path d="M9 3h8M9 6h8M9 9h7M9 12h5" stroke="#222" /></>,
  fork: <path d="M1 1l5 6v10M11 2v15M15 2v15" stroke="#222" />,
  angled: <><path d="M1 16L15 2M1 16h16M5 16l8-6" stroke="#222" /><path d="M3 13l9 3" stroke="#222" strokeDasharray="2 1" /></>,
  leftRight: <path d="M2 9h14M5 6L2 9l3 3M13 6l3 3-3 3" stroke="#000" strokeWidth="1.4" />,
  slashes: <path d="M3 15L10 2M7 16L14 3M11 17L17 6" stroke="#222" />,
  arch: <><path d="M2 16V9a7 7 0 0114 0v7" stroke="#222" /><path d="M5 16v-3a2 2 0 014 0v3M9 13a2 2 0 014 0v3" stroke="#222" /></>,
  pencil: <><path d="M1 15h8" stroke="#111" strokeWidth="1.3" /><path d="M9 15l2-3 4-9 2 1-4 9z" fill="#f3e040" stroke="#111" /><path d="M15 3l2 1 .5-2-1.5-1z" fill="#c22" /></>,
  curve: <path d="M3 16c6 0 10-5 11-13" stroke="#111" strokeWidth="1.2" />,
  downArrow: <path d="M8 2h3v8h3l-4.5 6L5 10h3z" fill="#e00000" />,
  upArrow: <path d="M8 16h3V8h3L9.5 2 5 8h3z" fill="#0000e0" />,
  circle: <circle cx="9" cy="9" r="7" stroke="#111" strokeWidth="1.2" />,
  rect: <rect x="2.5" y="2.5" width="13" height="13" stroke="#111" strokeWidth="1.2" />,
  abc: <text x="0" y="13" fontFamily="Liberation Sans, sans-serif" fontSize="10.5" fill="#111">abc</text>,
};

const renderTools = (ids: string[]) =>
  ids.map((id, i) => (
    <Tool key={id + i}>
      <Ico>{icons[id]}</Ico>
    </Tool>
  ));

const Triangle: React.FC<{ dir: "l" | "r"; bar?: boolean; color?: string }> = ({ dir, bar, color = "#444" }) => (
  <svg width="8" height="10" viewBox="0 0 8 10">
    <path d={dir === "l" ? "M6 1L2 5l4 4z" : "M2 1l4 4-4 4z"} fill={color} />
    {bar && <path d={dir === "l" ? "M1 1v8" : "M7 1v8"} stroke={color} />}
  </svg>
);

/* ---------- legends ---------- */
const BLUE = "#5252e6";
const OLIVE = "#808000";
const GREY = "#808080";
const legendTop: [string, string, number][] = [
  ["GS:FTSEMIB - 30 min", BLUE, 0],
  ["MCEDB", BLUE, 15],
  ["09/28/2023", "#fff", 9],
  ["L=27885.000", "#00ff00", 10],
  ["Hi=28190.000", "#fff", 10],
  ["Lo=27865.000", "#fff", 9],
  ["C=27885.000", "#00ff00", 9],
  ["Close", "#fff", 10],
  ["27885.000", "#00ffff", 16],
  ["HILOW Alert", "#fff", 9],
  ["28208.275", "#ff0000", 19],
];
const legendMid: [string, string, number][] = [
  ["Leo Chart", "#fff", 0],
  ["-4.67", "#00ffff", 18],
  ["8.00", "#ff0000", 10],
  ["-8.00", "#ff0000", 9.5],
  ["4.00", OLIVE, 10],
  ["-4.00", OLIVE, 9.5],
  ["0.00", "#0000ff", 10],
  ["Macd Ciclico", "#fff", 9.5],
  ["0.00", GREY, 39],
];
const legendLow: [string, string, number][] = [
  ["CCI Smothing ekam", "#fff", 0],
  ["-108.55", GREY, 18],
  ["120.00", GREY, 11],
  ["-120.00", GREY, 8],
  ["-108.55", "#404040", 10],
  ["DMI", "#fff", 10],
  ["15.70", "#00ff00", 19],
  ["27.31", "#ff00ff", 8],
  ["Stoc colore", "#fff", 9],
  ["0.98", "#b85c00", 37.5],
];

const ChartLegend: React.FC<{ items: [string, string, number][]; lh: number }> = ({ items, lh }) => (
  <Legend $lh={lh}>
    {items.map(([t, c, g], i) => (
      <LegendItem key={i} $color={c} $gap={g}>
        {t}
      </LegendItem>
    ))}
  </Legend>
);

const AxisValue: React.FC<{ y: number; t: string; x?: number; tick?: boolean }> = ({ y, t, x = 1849, tick = true }) => (
  <>
    {tick && <path d={`M1842 ${y + 0.5}h6`} stroke="#fff" />}
    <text x={x} y={y} dy=".36em" fill="#fff">
      {t}
    </text>
  </>
);

const AxisBox: React.FC<{ y: number; t: string; bg: string; x?: number; fg?: string; h?: number }> = ({ y, t, bg, x = 1851, fg = "#000", h = 23 }) => (
  <>
    <rect x="1842" y={y} width="78" height={h} fill={bg} />
    <text x={x} y={y + 11.5} dy=".36em" fill={fg}>
      {t}
    </text>
  </>
);

const Dashed: React.FC<{ y: number; color: string; dash?: string; w?: number }> = ({ y, color, dash, w = 1 }) => (
  <path d={`M2 ${y + 0.5}H1743`} stroke={color} strokeDasharray={dash} strokeWidth={w} />
);

const MiniGlyphs = ({ color = "#456" }: { color?: string }) => [
  <path key="a" d="M4 11h6" stroke={color} strokeWidth="2" />,
  <path key="b" d="M3.5 5.5h5v6h-5zM6 5V3h5v5H9" stroke={color} fill="none" />,
  <path key="c" d="M4 4l7 8M11 4l-7 8" stroke={color} strokeWidth="1.5" />,
];

const tabs = ["STOX C164", "STOX C55", "STOX  C30", "STOX  8 Giorni", "STOX 4 giorni", "FTSEMIB C164", "FTSEMIB C55", "FTSEMIB C30", "FTSEMIB  8 Giorni", "FTSEMIB  4 giorni", "STOXX-FTSEMIB sito", "PERCENTUALE", "STOX vs BUND", "FIB vs BUND", "C164_3_Int"];

const App: React.FC = () => {
  const glyphs = MiniGlyphs({});
  return (
    <Screen>
      <GlobalStyle />
      <TitleBar>
        <svg width="18" height="22" viewBox="0 0 18 22">
          <defs>
            <radialGradient id="ball" cx="50%" cy="40%" r="60%">
              <stop offset="0" stopColor="#7fb2ff" />
              <stop offset="1" stopColor="#0b2f9a" />
            </radialGradient>
          </defs>
          <ellipse cx="9" cy="12" rx="8.5" ry="9" fill="url(#ball)" />
          <path d="M9 1l5 8h-3v12H7V9H4z" fill="#dfeaff" stroke="#1c46b8" strokeWidth=".6" />
        </svg>
        <TitleText>TradeStation 8.1 - STOXX_FTSEMIB - FTSEMIB  4 giorni - [Chart Analysis - GS:FTSEMIB  30 min  [MCEDB] SPMIB FUTURES]</TitleText>
        <WinButtons>
          <WinButton $w={37}>
            <svg width="18" height="14" viewBox="0 0 18 14"><rect x="1" y="9" width="16" height="4" fill="#fff" /></svg>
          </WinButton>
          <WinButton $w={37}>
            <svg width="18" height="18" viewBox="0 0 18 18"><path d="M1.5 5.5h11v11h-11z" fill="none" stroke="#fff" strokeWidth="3" /><path d="M5 2h12v12" fill="none" stroke="#dfe6ee" strokeWidth="1.5" /></svg>
          </WinButton>
          <WinButton $w={62} $close>
            <svg width="20" height="18" viewBox="0 0 20 18"><path d="M3 2l14 14M17 2L3 16" stroke="#fff" strokeWidth="4" /></svg>
          </WinButton>
        </WinButtons>
      </TitleBar>

      <MenuBar>
        <svg width="19" height="17" viewBox="0 0 19 17">
          <rect width="19" height="17" fill="#161616" />
          <path d="M1 11l3-5 2 3 3-6 2 4 3-5 3 4" stroke="#2fd04a" fill="none" />
          <path d="M1 14h17" stroke="#d02020" strokeWidth="2" />
          <path d="M0 .5h19" stroke="#2a3fc0" />
        </svg>
        <MenuItems>
          <MenuItem $w={37}>File</MenuItem>
          <MenuItem $w={40}>Edit</MenuItem>
          <MenuItem $w={46}>View</MenuItem>
          <MenuItem $w={50}>Insert</MenuItem>
          <MenuItem $w={62}>Format</MenuItem>
          <MenuItem $w={69}>Drawing</MenuItem>
          <MenuItem $w={70}>Window</MenuItem>
          <MenuItem $w={40}>Help</MenuItem>
        </MenuItems>
        <MdiGroup>
          {glyphs.map((g, i) => (
            <MdiButton key={i}>
              <svg width="15" height="15" viewBox="0 0 15 15">{g}</svg>
            </MdiButton>
          ))}
        </MdiGroup>
      </MenuBar>

      <ToolBar>
        {renderTools(["doc", "open", "stack", "note", "olive"])}
        <ToolSep />
        {renderTools(["blueDoc", "print"])}
        <ToolSep />
        {renderTools(["winL", "winC", "lock", "sat", "cubes"])}
        <ToolSep />
        <Combo>
          <svg width="10" height="6" viewBox="0 0 10 6"><path d="M0 0h10L5 6z" fill="#111" /></svg>
        </Combo>
        <ToolSpacer $w={5} />
        <Triangle dir="r" color="#111" />
        <ToolSpacer $w={12} />
        <Tool>{<Ico>{icons.find}</Ico>}</Tool>
        <Grip $ml={80} />
        {renderTools(["grayCalc", "grayTbl", "table"])}
        <ToolSep />
        {renderTools(["wave", "arrows", "charts"])}
        <ToolSep />
        {renderTools(["chartIn", "box"])}
        <ToolSep />
        {renderTools(["cal", "barsFind", "blackChart", "blueBars", "candle"])}
        <ToolSep />
        {renderTools(["squeeze", "spread"])}
        <ToolSep />
        {renderTools(["zoomIn", "zoomOut"])}
        <ToolSep />
        {renderTools(["cursor", "screenT"])}
        <ToolSep />
        {renderTools(["hammer"])}
        <ToolSep />
        {renderTools(["plusDoc"])}
        <ToolSep />
        {renderTools(["grayNote"])}
        <Grip $ml={14} />
        {renderTools(["trend", "vlines", "hlines", "calcLines", "arcs", "fan", "stair", "fork", "angled", "leftRight", "slashes", "arch", "pencil"])}
        <ToolSep $w={10} />
        {renderTools(["curve", "downArrow", "upArrow", "circle", "rect", "abc"])}
      </ToolBar>

      <Pane $h={470}>
        <Plot>
          <PlotSvg viewBox="0 88 1841 470" fill="none">
            <path d={gridPath(108, 555)} stroke="#484848" strokeDasharray="6 3" />
            <path d="M2 285.5H1841" stroke="#800080" strokeDasharray="5 3" />
            <polyline points={toPoints(price)} stroke="#6464ff" />
            {hilowRed.map((s, i) => (
              <polyline key={i} points={toPoints(s)} stroke="#ff0000" strokeWidth="3.6" strokeDasharray="3.2 .7" />
            ))}
            {hilowGreen.map((s, i) => (
              <polyline key={i} points={toPoints(s)} stroke="#00ff00" strokeWidth="3.6" strokeDasharray="3.2 .7" />
            ))}
            <path d={price.map(([x, y]) => `M${Math.round(x - 2)} ${Math.round(y - 2)}h4v4h-4z`).join("")} fill="#00ffff" />
            <path d="M1538.3 394L1807.7 541.7" stroke="#ff0000" strokeWidth="3.4" />
            <text x="1744" y="273" dy=".36em" fill="#800080" fontSize="20">28710.000</text>
          </PlotSvg>
          <ChartLegend items={legendTop} lh={24} />
        </Plot>
        <Axis>
          <AxisSvg viewBox="1842 88 78 470">
            <path d="M1842 108.5h6" stroke="#fff" />
            <AxisValue y={159} t="29200" />
            <AxisValue y={211} t="29000" />
            <AxisValue y={262} t="28800" />
            <AxisValue y={312} t="28600" />
            <AxisValue y={364} t="28400" />
            <AxisBox y={403} t="28208" bg="#ff0000" x={1850} />
            <AxisValue y={465} t="28000" />
            <AxisValue y={517} t="27800" />
            <AxisBox y={486} t="27885" bg="#6a6aff" x={1850} />
          </AxisSvg>
          <AxisControls>
            {glyphs.map((g, i) => (
              <MdiButton key={i} $w={23} $h={26}>
                <svg width="15" height="15" viewBox="0 0 15 15">{g}</svg>
              </MdiButton>
            ))}
          </AxisControls>
        </Axis>
      </Pane>

      <Pane $h={216}>
        <Plot>
          <PlotSvg viewBox="0 558 1841 216" fill="none">
            <path d={gridPath(577, 770)} stroke="#484848" strokeDasharray="6 3" />
            <Dashed y={594} color="#ff0000" />
            <Dashed y={634} color="#808000" />
            <Dashed y={674} color="#0000ff" dash="4 2" />
            <Dashed y={689} color="#8a8a8a" dash="5 3" />
            <Dashed y={714} color="#808000" />
            <Dashed y={753} color="#ff0000" />
            {[174, 444, 714, 984, 1254, 1524, 1794].map((x) => (
              <path key={x} d={`M${x + 0.5} 582V768`} stroke="#008080" strokeDasharray="21 5" />
            ))}
            <polyline points={toPoints(macdRed)} stroke="#e80000" />
            <polyline points={toPoints(macdYellow)} stroke="#ffff00" />
            <polyline points={toPoints(macd)} stroke="#00ffff" />
            <path d="M1574 782.7L1799 708" stroke="#ff0000" strokeWidth="3.4" />
          </PlotSvg>
          <ChartLegend items={legendMid} lh={20} />
        </Plot>
        <Axis>
          <AxisSvg viewBox="1842 558 78 216">
            <path d="M1842 558.5H1920" stroke="#fff" />
            <AxisValue y={575} t="10.00" x={1851} />
            <AxisValue y={615} t="6.00" x={1849} />
            <AxisValue y={655} t="2.00" x={1849} />
            <AxisValue y={695} t="-2.00" x={1849} />
            <AxisValue y={734} t="-6.00" x={1849} />
            <AxisBox y={585} t="8.00" bg="#ff0000" />
            <AxisBox y={625} t="4.00" bg="#6b6b00" />
            <AxisBox y={665} t="0.00" bg="#0000ff" />
            <AxisBox y={705} t="-4.00" bg="#6b6b00" x={1849} />
            <AxisBox y={711} t="-4.67" bg="#00ffff" x={1849} />
            <AxisBox y={744} t="-8.00" bg="#ff0000" x={1849} />
          </AxisSvg>
        </Axis>
      </Pane>

      <Pane $h={216}>
        <Plot>
          <PlotSvg viewBox="0 774 1841 216" fill="none">
            <defs>
              <clipPath id="cciHigh"><rect x="0" y="774" width="1841" height="67" /></clipPath>
              <clipPath id="cciMid"><rect x="0" y="841" width="1841" height="113" /></clipPath>
              <clipPath id="cciLow"><rect x="0" y="954" width="1841" height="36" /></clipPath>
            </defs>
            <path d={gridPath(793, 990)} stroke="#484848" strokeDasharray="6 3" />
            <path d={hatchPath()} stroke="#505050" />
            <Dashed y={841} color="#8a8a8a" />
            <Dashed y={954} color="#8a8a8a" />
            <polyline points={toPoints(stoc)} stroke="#c86400" strokeDasharray="2.5 2.5" />
            <polyline points={toPoints(magenta)} stroke="#ff00ff" />
            <polyline points={toPoints(dmiGreen)} stroke="#00ff00" />
            <polyline points={toPoints(cci)} stroke="#ff0000" clipPath="url(#cciHigh)" />
            <polyline points={toPoints(cci)} stroke="#b4b4b4" clipPath="url(#cciMid)" />
            <polyline points={toPoints(cci)} stroke="#00ffff" clipPath="url(#cciLow)" />
            {cyanDots.map(([x, y]) => <circle key={x} cx={x} cy={y} r="4" fill="#00ffff" />)}
            {redDots.map(([x, y]) => <circle key={x} cx={x} cy={y} r="4" fill="#ff0000" />)}
            <rect x="1575.5" y="792.5" width="241" height="115.5" stroke="#ff0000" strokeWidth="3" />
            <path d="M1782 750L1652 801" stroke="#ff0000" strokeWidth="3.4" />
            <path d="M1636 807.5L1648 797L1652 806z" fill="#ff0000" />
            <path d="M1612 984.3L1802 952.7" stroke="#ff0000" strokeWidth="3.4" />
          </PlotSvg>
          <ChartLegend items={legendLow} lh={20} />
        </Plot>
        <Axis>
          <AxisSvg viewBox="1842 774 78 216">
            <path d="M1842 774.5H1920" stroke="#fff" />
            <AxisValue y={802} t="200.00" />
            <AxisValue y={849} t="100.00" />
            <AxisValue y={897} t="0.00" />
            <AxisValue y={945} t="-100.00" tick={false} />
            <path d="M1842 825.5h6M1842 873.5h6M1842 921.5h6M1842 969.5h6" stroke="#fff" />
            <AxisBox y={831} t="120.00" bg="#808080" />
            <rect x="1842" y="962" width="78" height="6" fill="#808080" />
            <AxisBox y={940} t="-108.55" bg="#a8a8a8" h={22} />
          </AxisSvg>
        </Axis>
      </Pane>

      <TimeAxis>
        <TimeSvg viewBox="0 990 1920 28" fill="#fff">
          <path d="M0 990.5H1920" stroke="#fff" />
          <path d="M21.5 990v4M57.5 990v10" stroke="#fff" />
          <path
            d={Array.from({ length: 23 }, (_, k) => `M${Math.round(228 + 69.2 * k) + 0.5} 990v4`).join("")}
            stroke="#fff"
          />
          {timeLabels.map((t, i) => (
            <text key={t} x={timeX[i]} y="1006" dy=".36em" textAnchor="middle">
              {t}
            </text>
          ))}
        </TimeSvg>
      </TimeAxis>

      <ScrollRow>
        <Triangle dir="l" color="#666" />
        <ScrollThumb>
          <ThumbLine />
          <ThumbLine />
          <ThumbLine />
        </ScrollThumb>
        <Triangle dir="r" color="#666" />
      </ScrollRow>

      <TabRow>
        <TabNav>
          <TabNavBtn><Triangle dir="l" bar color="#888" /></TabNavBtn>
          <TabNavBtn><Triangle dir="l" color="#777" /></TabNavBtn>
          <TabNavBtn><Triangle dir="r" color="#777" /></TabNavBtn>
          <TabNavBtn><Triangle dir="r" bar color="#888" /></TabNavBtn>
        </TabNav>
        {tabs.map((t) => (
          <Tab key={t} $active={t === "FTSEMIB  4 giorni"}>
            {t}
          </Tab>
        ))}
      </TabRow>

      <StatusBar>
        <StatusText>For Help, press F1</StatusText>
        <AcctCell>Acct:</AcctCell>
        <StatusCell $w={91}>Open Psns:</StatusCell>
        <StatusCell $w={62}>DT BP:</StatusCell>
        <StatusCell $w={87}>Purch Pwr:</StatusCell>
        <StatusCell $w={93}>Closed P/L:</StatusCell>
        <StatusCell $w={61}>RT TE:</StatusCell>
        <StatusCell $w={83}>Open P/L:</StatusCell>
        <StatusCell $w={89} $green>ORDER BAR</StatusCell>
        <StatusCell $w={69} $green>MACROS</StatusCell>
        <AlarmDot />
        <StatusCell $w={123}>28/09/2023 11:15</StatusCell>
      </StatusBar>
      <BottomEdge />
    </Screen>
  );
};

export default App;
